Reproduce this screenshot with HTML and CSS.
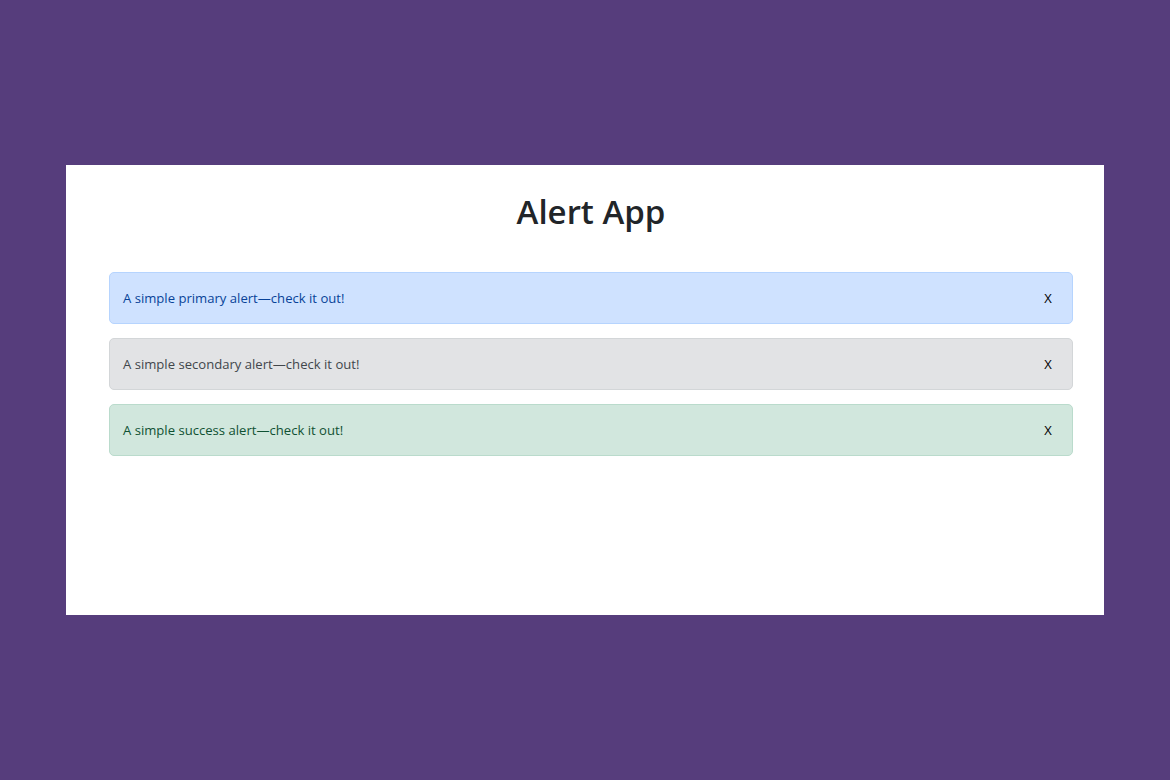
FILE: index.html
```html
<!DOCTYPE html>
<html>
<head>
<meta charset="utf-8">
<link rel="stylesheet" href="styles.css">
</head>
<body>
<div class="card">
  <h1 class="title">Alert App</h1>
  <div class="alerts">
    <div class="alert alert-primary"><span>A simple primary alert—check it out!</span><button class="close">X</button></div>
    <div class="alert alert-secondary"><span>A simple secondary alert—check it out!</span><button class="close">X</button></div>
    <div class="alert alert-success"><span>A simple success alert—check it out!</span><button class="close">X</button></div>
  </div>
</div>
</body>
</html>
```

FILE: styles.css
```css
html, body {
  margin: 0;
  padding: 0;
}
body {
  background: #563d7c;
  width: 1170px;
  height: 780px;
  padding-top: 165px;
  box-sizing: border-box;
  font-family: "Open Sans", "Noto Sans", sans-serif;
  color: #212529;
}
.card {
  margin-left: 66px;
  width: 1038px;
  height: 450px;
  background: #fff;
  box-sizing: border-box;
  padding: 27px 31px 0 43px;
}
.title {
  margin: 0;
  text-align: center;
  font-size: 33px;
  line-height: 40px;
  font-weight: 600;
  color: #212529;
  letter-spacing: 0;
}
.alerts {
  margin-top: 40px;
  display: flex;
  flex-direction: column;
  gap: 14px;
}
.alert {
  height: 52px;
  box-sizing: border-box;
  border: 1px solid transparent;
  border-radius: 5px;
  display: flex;
  align-items: center;
  justify-content: space-between;
  padding: 0 18px 0 13px;
  font-size: 13.1px;
}
.close {
  background: none;
  border: 0;
  padding: 0;
  font-family: "Open Sans", "Noto Sans", sans-serif;
  font-size: 13px;
  color: #000;
  width: 12px;
  cursor: pointer;
}
.alert-primary {
  background: #cfe2ff;
  border-color: #b6d4fe;
  color: #084298;
}
.alert-secondary {
  background: #e2e3e5;
  border-color: #d3d6d8;
  color: #41464b;
}
.alert-success {
  background: #d1e7dd;
  border-color: #badbcc;
  color: #0f5132;
}
```
